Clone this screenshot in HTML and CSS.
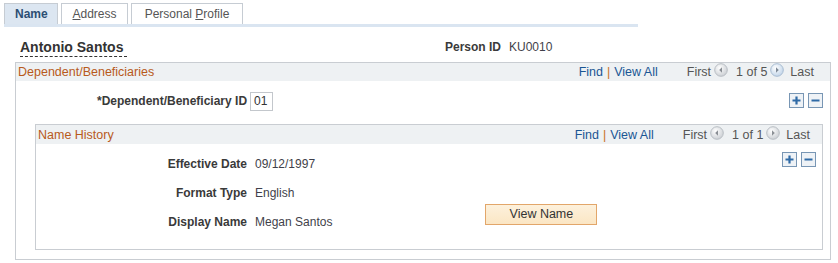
FILE: index.html
```html
<!DOCTYPE html>
<html>
<head>
<meta charset="utf-8">
<link rel="stylesheet" href="styles.css">
</head>
<body>
<div class="page">
  <div class="tabs">
    <div class="tab active">Name</div>
    <div class="tab"><u>A</u>ddress</div>
    <div class="tab">Personal <u>P</u>rofile</div>
  </div>
  <div class="tabline"></div>

  <div class="titlerow">
    <div class="person">Antonio Santos</div>
    <div class="pid"><span class="lbl">Person ID</span><span class="val">KU0010</span></div>
  </div>

  <div class="box outer">
    <div class="boxhead">
      <div class="boxtitle">Dependent/Beneficiaries</div>
      <div class="nav">
        <span class="link">Find</span><span class="pipe">|</span><span class="link">View All</span>
        <span class="first">First</span>
        <svg class="arrow" width="14" height="14" viewBox="0 0 14 14"><defs><radialGradient id="g1" cx="0.4" cy="0.35" r="0.7"><stop offset="0" stop-color="#ffffff"/><stop offset="1" stop-color="#c9cdd2"/></radialGradient></defs><circle cx="7" cy="7" r="6.3" fill="url(#g1)" stroke="#b9bec4"/><path d="M8 4.2 L5.2 7 L8 9.8 Z" fill="#8a8f95"/></svg>
        <span class="count">1 of 5</span>
        <svg class="arrow" width="14" height="14" viewBox="0 0 14 14"><defs><radialGradient id="g2" cx="0.4" cy="0.35" r="0.7"><stop offset="0" stop-color="#ffffff"/><stop offset="1" stop-color="#bfd3e8"/></radialGradient></defs><circle cx="7" cy="7" r="6.3" fill="url(#g2)" stroke="#a9bdd2"/><path d="M6 4.2 L8.8 7 L6 9.8 Z" fill="#7e8a98"/></svg>
        <span class="last">Last</span>
      </div>
    </div>
    <div class="outerbody">
      <div class="idrow">
        <span class="lbl idlbl">*Dependent/Beneficiary ID</span>
        <span class="input">01</span>
        <div class="pm">
          <span class="pmbtn"><svg width="15" height="15" viewBox="0 0 15 15"><rect x="0.5" y="0.5" width="14" height="14" fill="#eef2f6" stroke="#7896b4"/><path d="M7.5 3.5 V11.5 M3.5 7.5 H11.5" stroke="#2f6aa6" stroke-width="2.2"/></svg></span>
          <span class="pmbtn"><svg width="15" height="15" viewBox="0 0 15 15"><rect x="0.5" y="0.5" width="14" height="14" fill="#eef2f6" stroke="#7896b4"/><path d="M3.5 7.5 H11.5" stroke="#2f6aa6" stroke-width="2"/></svg></span>
        </div>
      </div>

      <div class="box inner">
        <div class="boxhead ihead">
          <div class="boxtitle">Name History</div>
          <div class="nav">
            <span class="link">Find</span><span class="pipe">|</span><span class="link">View All</span>
            <span class="first">First</span>
            <svg class="arrow" width="14" height="14" viewBox="0 0 14 14"><circle cx="7" cy="7" r="6.3" fill="url(#g1)" stroke="#b9bec4"/><path d="M8 4.2 L5.2 7 L8 9.8 Z" fill="#8a8f95"/></svg>
            <span class="count">1 of 1</span>
            <svg class="arrow" width="14" height="14" viewBox="0 0 14 14"><circle cx="7" cy="7" r="6.3" fill="url(#g1)" stroke="#b9bec4"/><path d="M6 4.2 L8.8 7 L6 9.8 Z" fill="#8a8f95"/></svg>
            <span class="last">Last</span>
          </div>
        </div>
        <div class="innerbody">
          <div class="fields">
            <div class="frow"><span class="lbl flbl">Effective Date</span><span class="val">09/12/1997</span></div>
            <div class="frow"><span class="lbl flbl">Format Type</span><span class="val">English</span></div>
            <div class="frow"><span class="lbl flbl">Display Name</span><span class="val">Megan Santos</span><span class="btn">View Name</span></div>
          </div>
          <div class="pm ipm">
            <span class="pmbtn"><svg width="15" height="15" viewBox="0 0 15 15"><rect x="0.5" y="0.5" width="14" height="14" fill="#eef2f6" stroke="#7896b4"/><path d="M7.5 3.5 V11.5 M3.5 7.5 H11.5" stroke="#2f6aa6" stroke-width="2.2"/></svg></span>
            <span class="pmbtn"><svg width="15" height="15" viewBox="0 0 15 15"><rect x="0.5" y="0.5" width="14" height="14" fill="#eef2f6" stroke="#7896b4"/><path d="M3.5 7.5 H11.5" stroke="#2f6aa6" stroke-width="2"/></svg></span>
          </div>
        </div>
      </div>
    </div>
  </div>
</div>
</body>
</html>
```

FILE: styles.css
```css
* { box-sizing: border-box; }
body {
  margin: 0;
  background: #fff;
  font-family: "Liberation Sans", Arial, sans-serif;
  font-size: 12px;
  color: #333;
}
.page {
  width: 838px;
  height: 263px;
  padding-top: 3px;
}
.tabs {
  display: flex;
  gap: 3px;
  padding-left: 4px;
  height: 21px;
}
.tab {
  height: 21px;
  border: 1px solid #c6ccd3;
  border-bottom: none;
  background: #fff;
  color: #555;
  font-size: 12px;
  line-height: 20px;
  padding: 0 10px;
}
.tab:nth-child(2) { width: 67px; text-align: center; }
.tab:nth-child(3) { width: 112px; text-align: center; }
.tab.active {
  width: 54px;
  text-align: center;
  background: #dce6f1;
  color: #2c4e73;
  font-weight: bold;
}
.tab u { text-decoration: underline; }
.tabline {
  margin-left: 4px;
  width: 634px;
  height: 3px;
  background: #dae5f1;
}
.titlerow {
  display: flex;
  align-items: flex-start;
  height: 35px;
  padding-top: 12px;
}
.person {
  margin-left: 20px;
  font-size: 14px;
  font-weight: bold;
  color: #333;
  line-height: 16px;
  border-bottom: 1px dashed #333;
  padding-bottom: 1px;
  width: 107px;
}
.pid {
  margin-left: 318px;
  line-height: 16px;
}
.lbl {
  font-weight: bold;
  color: #3a3a3a;
}
.val {
  color: #3f3f4a;
  margin-left: 8px;
}
.box {
  border: 1px solid #c9cdd2;
}
.outer {
  margin-left: 15px;
  width: 816px;
  height: 198px;
}
.boxhead {
  display: flex;
  justify-content: space-between;
  align-items: center;
  height: 18px;
  background: #eef1f3;
}
.boxtitle {
  color: #b85a1b;
  font-size: 12.5px;
  padding-left: 2px;
}
.nav {
  display: flex;
  align-items: center;
  padding-right: 16px;
  font-size: 12.5px;
}
.ihead .nav { padding-right: 12px; }
.link { color: #1a5694; }
.pipe { color: #c8731f; margin: 0 4px; }
.first { color: #555; margin-left: 29px; margin-right: 3px; }
.count { color: #555; margin: 0 3px 0 8px; }
.last { color: #555; margin-left: 6px; }
.arrow { display: block; margin-top: -4px; }
.outerbody {
  padding-top: 11px;
}
.idrow {
  display: flex;
  align-items: center;
  height: 18px;
}
.idlbl {
  margin-left: 81px;
}
.input {
  margin-left: 3px;
  width: 23px;
  height: 19px;
  border: 1px solid #c3c7cc;
  line-height: 17px;
  padding-left: 3px;
  color: #333;
}
.pm {
  display: flex;
  gap: 4px;
  margin-left: auto;
  margin-right: 7px;
  margin-top: -2px;
}
.pmbtn svg { display: block; }
.inner {
  margin: 14px 0 0 19px;
  width: 788px;
  height: 126px;
}
.ihead {
  height: 19px;
}
.innerbody {
  display: flex;
  position: relative;
}
.ipm {
  position: absolute;
  right: 6px;
  top: 8px;
  margin: 0;
}
.fields {
  padding-top: 5px;
}
.frow {
  display: flex;
  align-items: center;
  height: 29px;
}
.flbl {
  width: 211px;
  text-align: right;
}
.btn {
  align-self: flex-start;
  margin-top: -3px;
  margin-left: 153px;
  width: 112px;
  height: 21px;
  border: 1px solid #e2a66a;
  background: linear-gradient(#fdf1dc, #fbe6c4);
  color: #333;
  text-align: center;
  line-height: 19px;
  font-size: 12.5px;
}
```
